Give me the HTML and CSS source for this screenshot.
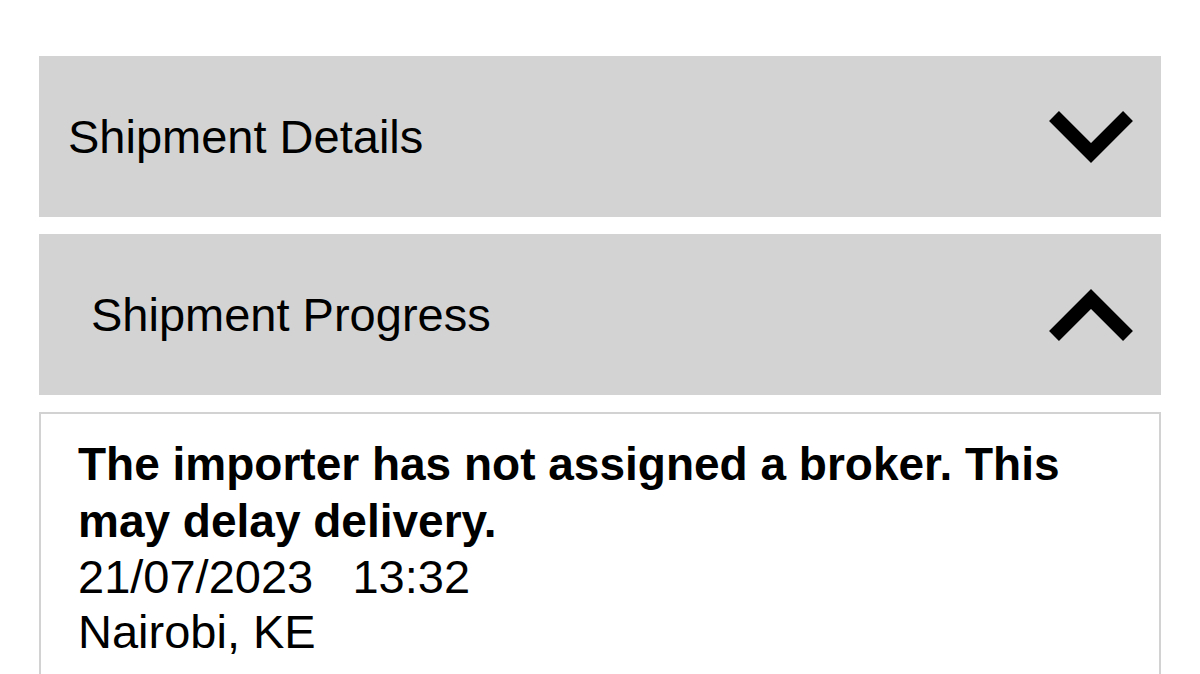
FILE: index.html
```html
<!DOCTYPE html>
<html lang="en">
<head>
  <meta charset="UTF-8">
  <title>Shipment</title>
  <link rel="stylesheet" href="styles.css">
</head>
<body>

  <div class="panel">
    <div class="panel-head">
      <span class="panel-title">Shipment Details</span>
      <svg class="chevron" viewBox="0 0 90 60" width="90" height="60">
        <path d="M8 9 L45 46 L82 9" />
      </svg>
    </div>
  </div>

  <div class="panel">
    <div class="panel-head panel-head-open">
      <span class="panel-title">Shipment Progress</span>
      <svg class="chevron" viewBox="0 0 90 60" width="90" height="60">
        <path d="M8 51 L45 14 L82 51" />
      </svg>
    </div>
  </div>

  <div class="event-box">
    <div class="event-status">The importer has not assigned a broker. This may delay delivery.</div>
    <div class="event-line event-time">21/07/2023   13:32</div>
    <div class="event-line">Nairobi, KE</div>
  </div>

</body>
</html>
```
FILE: styles.css
```css
body {
  margin: 0;
  padding: 56px 39px 0 39px;
  background-color: #fff;
  color: #000;
  font-family: "Liberation Sans", Arial, sans-serif;
}
.panel {
  margin-bottom: 17px;
}
.panel-head {
  display: flex;
  align-items: center;
  justify-content: space-between;
  height: 161px;
  padding: 0 25px 0 29px;
  background-color: #d3d3d3;
  box-sizing: border-box;
}
.panel-head-open {
  padding-left: 52px;
}
.panel-title {
  font-size: 47px;
}
.chevron path {
  fill: none;
  stroke: #000;
  stroke-width: 14;
  stroke-linecap: butt;
  stroke-linejoin: miter;
}
.event-box {
  border: 2px solid #d2d2d2;
  border-bottom: none;
  padding: 22px 37px 80px 37px;
}
.event-status {
  font-size: 46px;
  font-weight: bold;
  line-height: 57px;
}
.event-line {
  font-size: 47px;
  line-height: 56px;
  margin-top: -1px;
}
.event-time {
  white-space: pre;
}
```
